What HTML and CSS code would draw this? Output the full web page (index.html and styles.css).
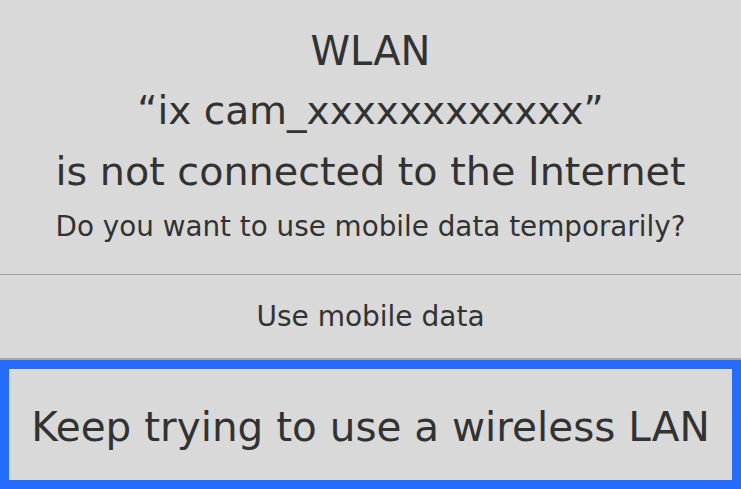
FILE: index.html
```html
<!DOCTYPE html>
<html lang="en">
<head>
<meta charset="utf-8">
<title>WLAN</title>
<link rel="stylesheet" href="styles.css">
</head>
<body>
<div class="dialog">
  <div class="message">
    <div class="title">WLAN</div>
    <div class="title title-quote">“ix cam_xxxxxxxxxxxx”</div>
    <div class="title title-status">is not connected to the Internet</div>
    <div class="question">Do you want to use mobile data temporarily?</div>
  </div>
  <div class="action action-secondary">Use mobile data</div>
  <div class="action action-primary">Keep trying to use a wireless LAN</div>
</div>
</body>
</html>
```

FILE: styles.css
```css
html, body {
  margin: 0;
  padding: 0;
  background: #d9d9d9;
}

body {
  width: 741px;
  height: 489px;
  overflow: hidden;
  font-family: "DejaVu Sans", "Liberation Sans", sans-serif;
  color: #323232;
}

.dialog {
  display: flex;
  flex-direction: column;
  height: 489px;
}

.message {
  padding: 21px 0 27px;
  text-align: center;
}

.title {
  font-size: 40px;
  line-height: 60px;
  white-space: nowrap;
}

.title-quote {
  font-size: 39px;
}

.title-status {
  font-size: 39.7px;
}

.question {
  margin-top: 6px;
  font-size: 27.8px;
  line-height: 40px;
  white-space: nowrap;
}

.action {
  text-align: center;
  white-space: nowrap;
}

.action-secondary {
  border-top: 1px solid #a6a6a6;
  border-bottom: 2px solid #a6a6a6;
  padding: 22px 0 21px;
  font-size: 28px;
  line-height: 40px;
}

.action-primary {
  border: 9px solid #246bfe;
  height: 105px;
  padding-top: 6px;
  font-size: 40.5px;
  line-height: 105px;
}
```
